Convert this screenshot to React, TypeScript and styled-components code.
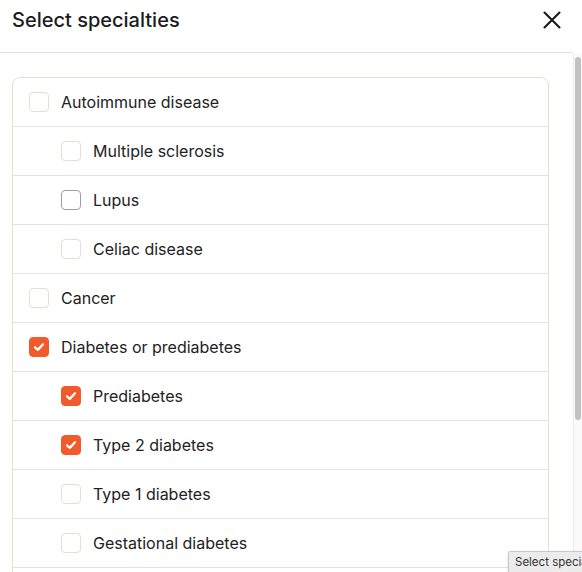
import React from "react";
import styled, { createGlobalStyle } from "styled-components";

const GlobalStyle = createGlobalStyle`
  html, body { margin: 0; padding: 0; background: #ffffff; }
  body { font-family: Inter, "Noto Sans", Roboto, sans-serif; -webkit-font-smoothing: antialiased; }
  * { box-sizing: border-box; }
`;

const Modal = styled.div`
  position: relative;
  height: 572px;
  width: 582px;
  display: flex;
  flex-direction: column;
  background: #fff;
  overflow: hidden;
`;

const Header = styled.header`
  height: 53px;
  flex: none;
  display: flex;
  align-items: center;
  justify-content: space-between;
  padding: 0 9px 13px 12px;
  border-bottom: 1px solid #e6e0da;
  margin-right: 9px;
`;

const Title = styled.h2`
  margin: 0;
  font-size: 20px;
  font-weight: 500;
  color: #1c1c1c;
`;

const CloseButton = styled.button`
  width: 24px;
  height: 24px;
  padding: 0;
  border: none;
  background: none;
  display: flex;
  align-items: center;
  justify-content: center;
  cursor: pointer;
`;

const Body = styled.div`
  flex: 1;
  min-height: 0;
  display: flex;
`;

const ScrollArea = styled.div`
  flex: 1;
  overflow: hidden;
  padding: 24px 24px 24px 12px;
`;

const Track = styled.div`
  width: 9px;
  flex: none;
  background: #fafafa;
  border-left: 1px solid #ececec;
  padding: 4px 1px 0 1px;
`;

const Thumb = styled.div`
  height: 363px;
  border-radius: 4px;
  background: #c2c2c2;
`;

const List = styled.ul`
  list-style: none;
  margin: 0;
  padding: 0;
  border: 1px solid #e6ddd5;
  border-radius: 8px;
`;

const Row = styled.li<{ $nested: boolean }>`
  height: 49px;
  display: flex;
  align-items: center;
  gap: 12px;
  padding-left: ${(p) => (p.$nested ? 48 : 16)}px;
  border-bottom: 1px solid #e9e1da;
  font-size: 16px;
  color: #222222;

  &:last-child { border-bottom: none; height: 48px; }
`;

const Box = styled.span<{ $checked: boolean; $hover: boolean }>`
  width: 20px;
  height: 20px;
  flex: none;
  border-radius: 4px;
  display: flex;
  align-items: center;
  justify-content: center;
  background: ${(p) => (p.$checked ? "#f15a2b" : "#ffffff")};
  border: 1px solid
    ${(p) => (p.$checked ? "#f15a2b" : p.$hover ? "#9e9e9e" : "#e6ddd5")};
`;

const Tooltip = styled.div`
  position: absolute;
  left: 508px;
  top: 551px;
  height: 22px;
  padding: 3px 6px 0 6px;
  background: #ececec;
  border: 1px solid #c9c9c9;
  border-radius: 2px;
  font-size: 11.5px;
  color: #333;
  white-space: nowrap;
  box-shadow: 0 1px 3px rgba(0, 0, 0, 0.15);
`;

type Item = { label: string; nested?: boolean; checked?: boolean; hover?: boolean };

const items: Item[] = [
  { label: "Autoimmune disease" },
  { label: "Multiple sclerosis", nested: true },
  { label: "Lupus", nested: true, hover: true },
  { label: "Celiac disease", nested: true },
  { label: "Cancer" },
  { label: "Diabetes or prediabetes", checked: true },
  { label: "Prediabetes", nested: true, checked: true },
  { label: "Type 2 diabetes", nested: true, checked: true },
  { label: "Type 1 diabetes", nested: true },
  { label: "Gestational diabetes", nested: true },
  { label: "Heart disease" },
];

const Check = () => (
  <svg width="14" height="14" viewBox="0 0 14 14" fill="none">
    <path d="M3 7.3 L5.8 9.9 L11 4.3" stroke="#fff" strokeWidth="2.3" strokeLinecap="round" strokeLinejoin="round" />
  </svg>
);

export default function App() {
  return (
    <Modal>
      <GlobalStyle />
      <Header>
        <Title>Select specialties</Title>
        <CloseButton aria-label="Close">
          <svg width="18" height="18" viewBox="0 0 18 18" fill="none">
            <path d="M1.5 1.5 L16.5 16.5 M16.5 1.5 L1.5 16.5" stroke="#1a1a1a" strokeWidth="2.1" strokeLinecap="round" />
          </svg>
        </CloseButton>
      </Header>
      <Body>
        <ScrollArea>
          <List>
            {items.map((it) => (
              <Row key={it.label} $nested={!!it.nested}>
                <Box $checked={!!it.checked} $hover={!!it.hover}>
                  {it.checked && <Check />}
                </Box>
                {it.label}
              </Row>
            ))}
          </List>
        </ScrollArea>
        <Track>
          <Thumb />
        </Track>
      </Body>
      <Tooltip>Select specialties</Tooltip>
    </Modal>
  );
}
